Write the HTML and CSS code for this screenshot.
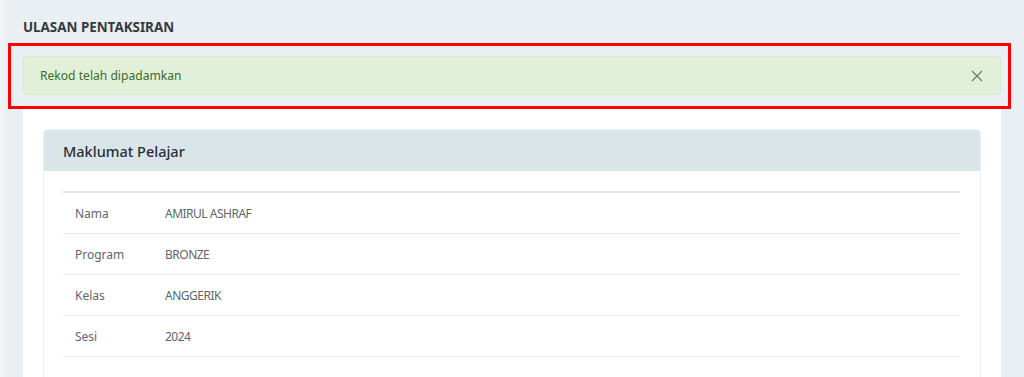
FILE: index.html
```html
<!DOCTYPE html>
<html lang="ms">
<head>
    <meta charset="UTF-8">
    <meta name="viewport" content="width=device-width, initial-scale=1.0">
    <title>Ulasan Pentaksiran</title>
    <link rel="stylesheet" href="styles.css">
</head>
<body>
    <div class="edge"></div>
    <div class="page">
        <h1 class="page-title">ULASAN PENTAKSIRAN</h1>
        <div class="highlight">
            <div class="alert">
                <span>Rekod telah dipadamkan</span>
                <button class="close" type="button" aria-label="Tutup">
                    <svg width="12" height="12" viewBox="0 0 12 12">
                        <path d="M1 1L11 11M11 1L1 11" stroke="#6f7d6f" stroke-width="1.3" fill="none"/>
                    </svg>
                </button>
            </div>
        </div>
        <div class="panel">
            <div class="card">
                <div class="card-header">Maklumat Pelajar</div>
                <div class="card-body">
                    <table class="info">
                        <tr><td class="label">Nama</td><td class="value">AMIRUL ASHRAF</td></tr>
                        <tr><td class="label">Program</td><td class="value">BRONZE</td></tr>
                        <tr><td class="label">Kelas</td><td class="value">ANGGERIK</td></tr>
                        <tr><td class="label">Sesi</td><td class="value">2024</td></tr>
                    </table>
                </div>
            </div>
        </div>
    </div>
</body>
</html>
```

FILE: styles.css
```css
body {
    margin: 0;
    font-family: "Noto Sans", Arial, sans-serif;
    background: #eaeff3;
    height: 377px;
    overflow: hidden;
    display: flex;
}

.edge {
    width: 5px;
    background: #f1f4f7;
    flex-shrink: 0;
}

.page {
    flex: 1;
    padding: 0 23px 0 18px;
}

.page-title {
    margin: 0;
    padding-top: 18px;
    height: 25px;
    font-size: 13.4px;
    font-weight: 700;
    color: #343a40;
}

.highlight {
    margin: 0 -10px 0 -15px;
    border: 3px solid #ff0000;
    padding: 10px 7px 11px 12px;
    height: 39px;
}

.alert {
    height: 37px;
    background: #e2f0da;
    border: 1px solid #d6e9c9;
    border-radius: 4px;
    display: flex;
    align-items: center;
    justify-content: space-between;
    padding: 0 17px 0 16px;
    color: #3d6b2e;
    font-size: 12.1px;
}

.close {
    border: none;
    background: none;
    padding: 0;
    width: 12px;
    height: 12px;
    display: flex;
}

.panel {
    background: #ffffff;
    padding: 20px 20px 0 20px;
    height: 300px;
}

.card {
    border: 1px solid #eceff2;
    border-radius: 4px 4px 0 0;
    height: 100%;
}

.card-header {
    background: #dae5ea;
    height: 41px;
    display: flex;
    align-items: center;
    padding-left: 19px;
    font-size: 14.5px;
    font-weight: 500;
    color: #2b2f33;
    border-radius: 4px 4px 0 0;
}

.card-body {
    padding: 20px 20px 0 19px;
}

.info {
    width: 100%;
    border-collapse: collapse;
    border-top: 2px solid #e3e6ea;
    font-size: 12px;
    color: #5f666d;
}

.info td {
    height: 40px;
    border-bottom: 1px solid #e8eaed;
    padding: 0 12px;
}

.info td.label {
    width: 66px;
}

.info td.value {
    letter-spacing: -0.5px;
}
```
